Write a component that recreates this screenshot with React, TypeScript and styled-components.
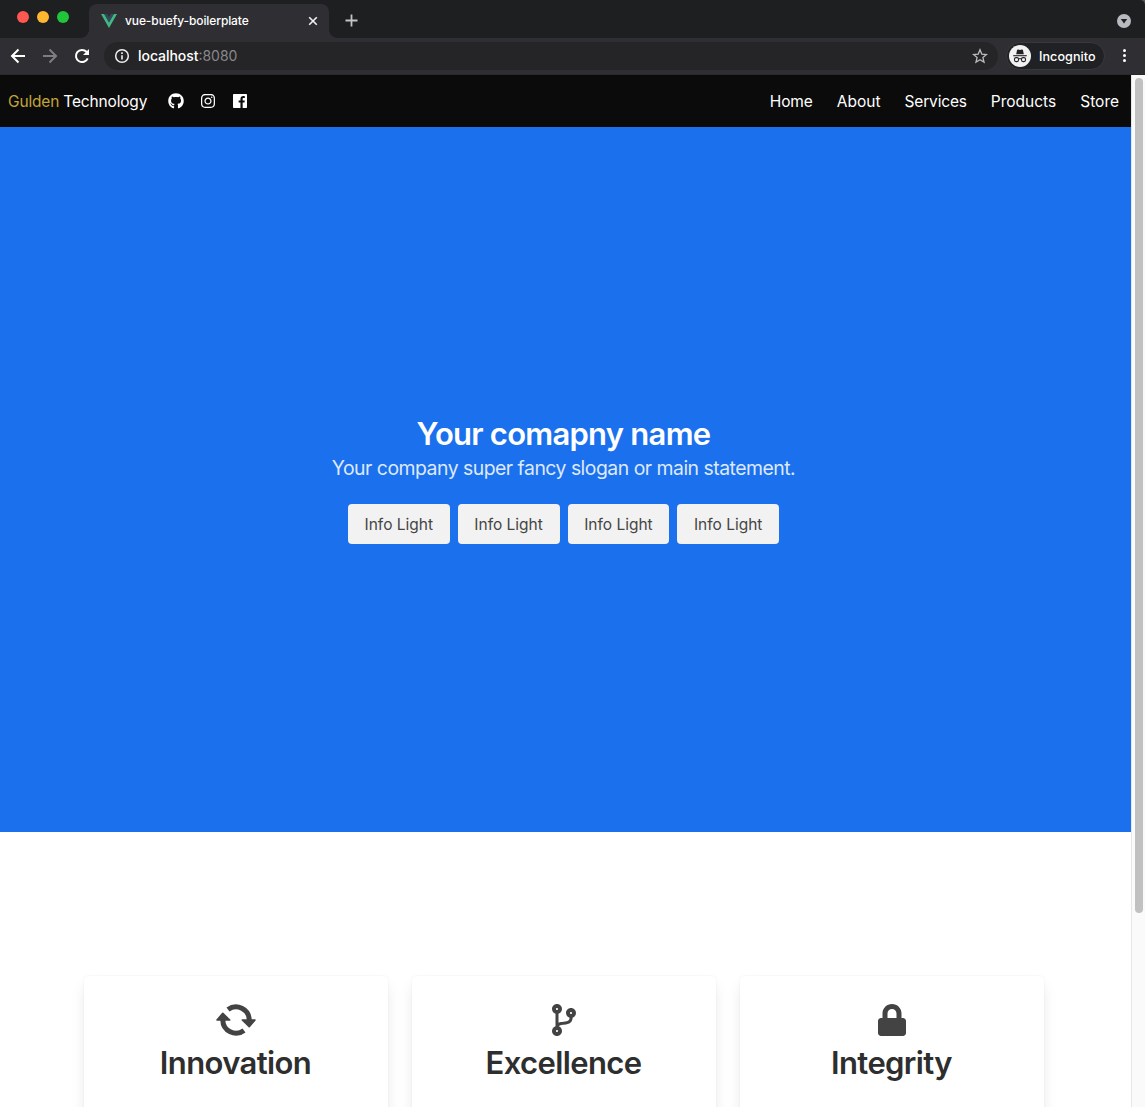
import React from "react";
import styled, { createGlobalStyle } from "styled-components";
import { FaCodeBranch, FaGithub, FaInstagram, FaLock } from "react-icons/fa";

const GlobalStyle = createGlobalStyle`
  *, *::before, *::after { box-sizing: border-box; }
  body { margin: 0; overflow: hidden; background: #fff; }
  body, button { font-family: Inter, "Liberation Sans", sans-serif; }
  svg { display: block; flex: none; }
`;

const Window = styled.div`
  display: flex;
  flex-direction: column;
  width: 1145px;
  height: 1107px;
  overflow: hidden;
  background: #55565a;
`;

const TabStrip = styled.div`
  display: flex;
  align-items: flex-end;
  height: 38px;
  flex: none;
  padding-left: 17px;
  background: #1e1f21;
  border-top-right-radius: 5px;
`;

const TrafficLights = styled.div`
  display: flex;
  gap: 8px;
  width: 72px;
  align-self: flex-start;
  padding-top: 11px;
`;

const Light = styled.span<{ $color: string }>`
  width: 12px;
  height: 12px;
  border-radius: 50%;
  background: ${(p) => p.$color};
`;

const Tab = styled.div`
  position: relative;
  display: flex;
  align-items: center;
  width: 240px;
  height: 34px;
  padding: 0 11px 0 12px;
  background: #2f2e33;
  border-radius: 8px 8px 0 0;

  &::before,
  &::after {
    content: "";
    position: absolute;
    bottom: 0;
    width: 8px;
    height: 8px;
  }
  &::before {
    right: 100%;
    background: radial-gradient(circle at 0 0, transparent 7.5px, #2f2e33 8px);
  }
  &::after {
    left: 100%;
    background: radial-gradient(circle at 100% 0, transparent 7.5px, #2f2e33 8px);
  }
`;

const Label = styled.span<{ $size: number; $spacing?: number; $weight?: number; $color?: string }>`
  font-size: ${(p) => p.$size}px;
  letter-spacing: ${(p) => p.$spacing ?? 0}px;
  font-weight: ${(p) => p.$weight ?? 400};
  color: ${(p) => p.$color ?? "inherit"};
  white-space: nowrap;
`;

const TabTitle = styled.div`
  flex: 1;
  margin-left: 8px;
  padding-bottom: 2px;
  line-height: 16px;
`;

const NewTab = styled.div`
  margin: 0 0 11px 15.5px;
`;

const TabMenu = styled.div`
  margin: 0 14px 10px auto;
`;

const Toolbar = styled.div`
  display: flex;
  align-items: center;
  height: 37px;
  flex: none;
  padding: 0 14px 1px 10px;
  background: #2f2e33;
  border-bottom: 1px solid #29292c;
`;

const NavButtons = styled.div`
  display: flex;
  gap: 16px;
  width: 94px;
`;

const AddressBar = styled.div`
  display: flex;
  align-items: center;
  width: 894px;
  height: 28px;
  padding: 0 10px;
  border-radius: 14px;
  background: #252527;
`;

const Url = styled.div`
  flex: 1;
  margin-left: 8px;
  color: #fff;
  line-height: 18px;
`;

const Incognito = styled.div`
  display: flex;
  align-items: center;
  gap: 8px;
  width: 99px;
  height: 28px;
  margin-left: 8px;
  padding-left: 2px;
  border: 1px solid #39393c;
  border-radius: 14px;
  background: #202124;
  color: #fff;

  > span {
    padding-top: 1px;
  }
`;

const MenuDots = styled.div`
  display: grid;
  gap: 2px;
  margin: 0 5px 0 auto;

  span {
    width: 3px;
    height: 3px;
    border-radius: 50%;
    background: #fff;
  }
`;

const Viewport = styled.div`
  display: flex;
  flex: 1;
  min-height: 0;
`;

const Page = styled.main`
  flex: 1;
  min-width: 0;
  overflow: hidden;
  background: #fff;
`;

const Scrollbar = styled.div`
  width: 14px;
  padding: 3px 2px 0 3px;
  border-left: 1px solid #e6e6e6;
  background: #fafafa;
`;

const Thumb = styled.div`
  width: 8px;
  height: 835px;
  border-radius: 4px;
  background: #c1c1c1;
`;

const Navbar = styled.nav`
  display: flex;
  align-items: center;
  height: 52px;
  padding: 0 12px 0 8px;
  background: #0b0b0b;
  color: #fff;
`;

const Brand = styled.div`
  width: 151.5px;
  line-height: 24px;
`;

const Social = styled.div`
  display: flex;
  align-items: center;

  > span {
    display: flex;
    justify-content: center;
    width: 32px;
  }
`;

const NavLinks = styled.div`
  display: flex;
  gap: 24px;
  margin-left: auto;
  padding-top: 1px;
  line-height: 24px;
`;

const Hero = styled.section`
  display: flex;
  flex-direction: column;
  align-items: center;
  height: 705px;
  padding: 289px 4px 0 0;
  background: #1b70ed;
  color: #fff;
`;

const HeroTitle = styled.h1`
  margin: 0;
  font-size: 31px;
  font-weight: 600;
  line-height: 36px;
  letter-spacing: -0.75px;
  white-space: nowrap;
`;

const Slogan = styled.p`
  margin: 1px 0 0;
  font-size: 19.4px;
  line-height: 30px;
  letter-spacing: -0.5px;
  color: #dde9fc;
  white-space: nowrap;
`;

const Buttons = styled.div`
  display: flex;
  gap: 8px;
  margin-top: 21px;
`;

const InfoButton = styled.button`
  width: 101.8px;
  height: 40px;
  padding: 1px 0 0;
  border: 0;
  border-radius: 4px;
  background: #f2f2f2;
  color: #454545;
  font-size: 15.5px;
  line-height: 24px;
  white-space: nowrap;
`;

const Cards = styled.section`
  display: flex;
  gap: 24px;
  padding: 144px 0 0 84px;
`;

const Card = styled.article`
  display: flex;
  flex-direction: column;
  align-items: center;
  width: 304px;
  height: 260px;
  padding: 28px 1px 0 0;
  border-radius: 5px;
  background: #fff;
  box-shadow: 0 8px 16px -2px rgba(10, 10, 10, 0.1), 0 0 0 1px rgba(10, 10, 10, 0.02);
  color: #434343;
`;

const CardTitle = styled.h2`
  margin: 9px 0 0;
  font-size: 31px;
  font-weight: 600;
  line-height: 36px;
  letter-spacing: -0.62px;
  color: #2e2e2e;
`;

const VueLogo = () => (
  <svg width="16" height="14" viewBox="0 0 16 14">
    <path d="M0 0h3.2L8 8.3 12.8 0H16L8 14z" fill="#41b883" />
    <path d="M3.2 0h2.9L8 3.3 9.9 0h2.9L8 8.4z" fill="#35495e" />
  </svg>
);

const IncognitoIcon = () => (
  <svg width="22" height="22" viewBox="0 0 22 22">
    <circle cx="11" cy="11" r="11" fill="#f1f1f2" />
    <path d="M7.2 9.2 8 5.3q.3-1 1.2-.7l1.8.4 1.8-.4q.9-.3 1.2.7l.8 3.9z" fill="#202124" />
    <path d="M4.2 10.7h13.6" stroke="#202124" strokeWidth="1.1" />
    <rect x="5.5" y="12.6" width="4" height="4" rx="1.5" fill="none" stroke="#202124" strokeWidth="1.1" />
    <rect x="12.5" y="12.6" width="4" height="4" rx="1.5" fill="none" stroke="#202124" strokeWidth="1.1" />
    <path d="M9.5 14q1.5-.9 3 0" fill="none" stroke="#202124" strokeWidth="1" />
  </svg>
);

const FacebookIcon = () => (
  <svg width="16" height="16" viewBox="-32 0 512 512" fill="currentColor">
    <path d="M448 56.7v398.5c0 13.7-11.1 24.7-24.7 24.7H309.1V306.5h58.2l8.7-67.6h-67v-43.2c0-19.6 5.4-32.9 33.5-32.9h35.8v-60.5c-6.2-.8-27.4-2.7-52.2-2.7-51.6 0-87 31.5-87 89.4v49.9h-58.4v67.6h58.4V480H24.7C11.1 480 0 468.9 0 455.3V56.7C0 43.1 11.1 32 24.7 32h398.5c13.7 0 24.8 11.1 24.8 24.7z" />
  </svg>
);

const CycleIcon = () => (
  <svg width="41" height="32" viewBox="-1 0 41 32">
    {[0, 180].map((angle) => (
      <g key={angle} transform={`rotate(${angle} 20 16)`}>
        <path d="M12 5.6A13.2 13.2 0 0 1 33.2 16" fill="none" stroke="currentColor" strokeWidth="5" />
        <path d="M26.3 16h12.7l-5.8 6.6z" fill="currentColor" stroke="currentColor" strokeWidth="1.6" strokeLinejoin="round" />
      </g>
    ))}
  </svg>
);

const links = [
  { text: "Home", spacing: -0.1 },
  { text: "About", spacing: 0 },
  { text: "Services", spacing: -0.16 },
  { text: "Products", spacing: 0 },
  { text: "Store", spacing: 0 },
];

const cards = [
  { title: "Innovation", icon: <CycleIcon /> },
  { title: "Excellence", icon: <FaCodeBranch size={32} /> },
  { title: "Integrity", icon: <FaLock size={32} /> },
];

export default function App() {
  return (
    <Window>
      <GlobalStyle />
      <TabStrip>
        <TrafficLights>
          <Light $color="#ff5850" />
          <Light $color="#ffb730" />
          <Light $color="#20c53c" />
        </TrafficLights>
        <Tab>
          <VueLogo />
          <TabTitle>
            <Label $size={12} $spacing={-0.1} $weight={500} $color="#fff">vue-buefy-boilerplate</Label>
          </TabTitle>
          <svg width="10" height="10" viewBox="0 0 10 10" stroke="#f1f1f3" strokeWidth="1.6">
            <path d="M1.2 1.2l7.6 7.6M8.8 1.2L1.2 8.8" />
          </svg>
        </Tab>
        <NewTab>
          <svg width="13" height="13" viewBox="0 0 13 13" stroke="#c3c4c8" strokeWidth="1.8">
            <path d="M6.5.5v12M.5 6.5h12" />
          </svg>
        </NewTab>
        <TabMenu>
          <svg width="14" height="14" viewBox="0 0 14 14">
            <circle cx="7" cy="7" r="7" fill="#b8babf" />
            <path d="M3.8 5h6.4L7 9.5z" fill="#1e1f21" />
          </svg>
        </TabMenu>
      </TabStrip>
      <Toolbar>
        <NavButtons>
          <svg width="16" height="16" viewBox="0 0 16 16" fill="none" stroke="#fff" strokeWidth="2">
            <path d="M15 8H2.5M8.5 1.5L2 8l6.5 6.5" />
          </svg>
          <svg width="16" height="16" viewBox="0 0 16 16" fill="none" stroke="#7e7e82" strokeWidth="2">
            <path d="M1 8h12.5M7.5 1.5L14 8l-6.5 6.5" />
          </svg>
          <svg width="16" height="16" viewBox="0 0 16 16" fill="none" stroke="#fff" strokeWidth="2">
            <path d="M13.7 10.3A6.1 6.1 0 1 1 12.5 3.8L14 5.3" />
            <path d="M15 1v6H9z" fill="#fff" stroke="none" />
          </svg>
        </NavButtons>
        <AddressBar>
          <svg width="16" height="16" viewBox="0 0 16 16" fill="none" stroke="#f1f1f2">
            <circle cx="8" cy="8" r="6.3" strokeWidth="1.5" />
            <path d="M8 7.2v4.2M8 4.3v1.6" strokeWidth="1.6" />
          </svg>
          <Url>
            <Label $size={14} $spacing={-0.05} $weight={500}>localhost</Label>
            <Label $size={14} $color="#88888b">:8080</Label>
          </Url>
          <svg width="16" height="16" viewBox="0 0 16 16" fill="none" stroke="#b9babd" strokeWidth="1.3">
            <path d="M8 1.8l1.8 4.3 4.7.4-3.6 3 1.1 4.6L8 11.7l-4 2.4 1.1-4.6-3.6-3 4.7-.4z" />
          </svg>
        </AddressBar>
        <Incognito>
          <IncognitoIcon />
          <Label $size={12.6} $spacing={0.05} $weight={500}>Incognito</Label>
        </Incognito>
        <MenuDots>
          <span />
          <span />
          <span />
        </MenuDots>
      </Toolbar>
      <Viewport>
        <Page>
          <Navbar>
            <Brand>
              <Label $size={15.5} $spacing={-0.17} $color="#c4a53a">Gulden</Label>
              <Label $size={15.5} $spacing={-0.17}> Technology</Label>
            </Brand>
            <Social>
              <span><FaGithub size={16} /></span>
              <span><FaInstagram size={16} /></span>
              <span><FacebookIcon /></span>
            </Social>
            <NavLinks>
              {links.map((link) => (
                <Label key={link.text} $size={15.5} $spacing={link.spacing}>{link.text}</Label>
              ))}
            </NavLinks>
          </Navbar>
          <Hero>
            <HeroTitle>Your comapny name</HeroTitle>
            <Slogan>Your company super fancy slogan or main statement.</Slogan>
            <Buttons>
              {[0, 1, 2, 3].map((id) => (
                <InfoButton key={id}>Info Light</InfoButton>
              ))}
            </Buttons>
          </Hero>
          <Cards>
            {cards.map((card) => (
              <Card key={card.title}>
                {card.icon}
                <CardTitle>{card.title}</CardTitle>
              </Card>
            ))}
          </Cards>
        </Page>
        <Scrollbar>
          <Thumb />
        </Scrollbar>
      </Viewport>
    </Window>
  );
}
